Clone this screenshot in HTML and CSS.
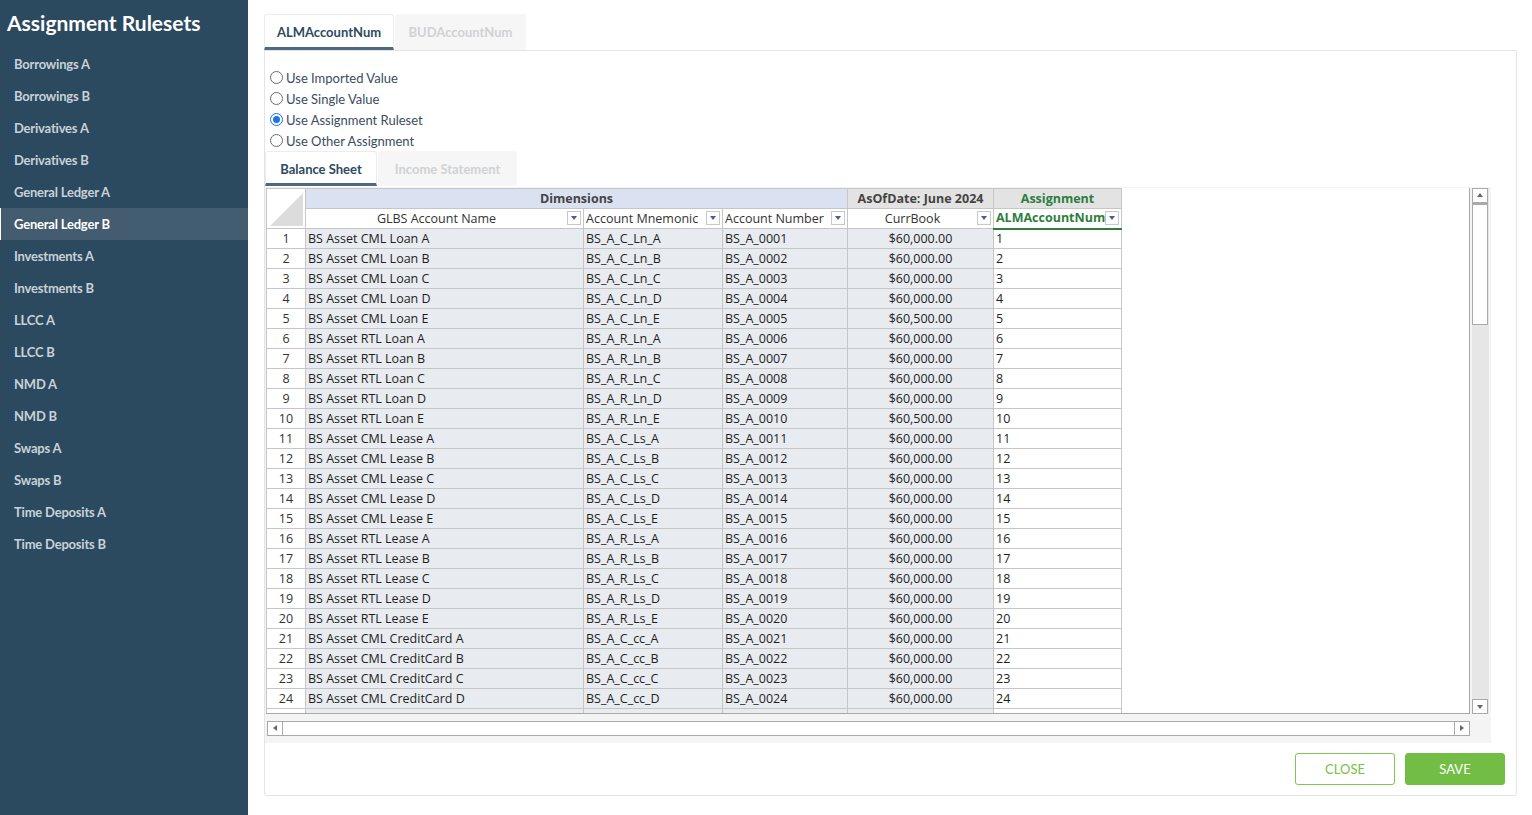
FILE: index.html
```html
<!DOCTYPE html>
<html>
<head>
<meta charset="utf-8">
<title>Assignment Rulesets</title>
<link rel="stylesheet" href="styles.css">
</head>
<body>
<aside class="sidebar">
  <h1 class="side-title">Assignment Rulesets</h1>
  <ul class="side-list">
    <li class="side-item">Borrowings A</li>
    <li class="side-item">Borrowings B</li>
    <li class="side-item">Derivatives A</li>
    <li class="side-item">Derivatives B</li>
    <li class="side-item">General Ledger A</li>
    <li class="side-item active">General Ledger B</li>
    <li class="side-item">Investments A</li>
    <li class="side-item">Investments B</li>
    <li class="side-item">LLCC A</li>
    <li class="side-item">LLCC B</li>
    <li class="side-item">NMD A</li>
    <li class="side-item">NMD B</li>
    <li class="side-item">Swaps A</li>
    <li class="side-item">Swaps B</li>
    <li class="side-item">Time Deposits A</li>
    <li class="side-item">Time Deposits B</li>
  </ul>
</aside>
<main class="main">
  <div class="tabs">
    <div class="tab active">ALMAccountNum</div>
    <div class="tab">BUDAccountNum</div>
  </div>
  <section class="panel">
    <div class="radios">
      <label class="radio"><span class="dot"></span>Use Imported Value</label>
      <label class="radio"><span class="dot"></span>Use Single Value</label>
      <label class="radio"><span class="dot checked"></span>Use Assignment Ruleset</label>
      <label class="radio"><span class="dot"></span>Use Other Assignment</label>
    </div>
    <div class="subtabs">
      <div class="subtab active">Balance Sheet</div>
      <div class="subtab">Income Statement</div>
    </div>
    <div class="gridwrap">
      <div class="gridrow">
        <div class="viewport">
          <table class="grid">
            <colgroup>
              <col class="c-num"><col class="c-name"><col class="c-mn"><col class="c-acc"><col class="c-cur"><col class="c-asg">
            </colgroup>
            <thead>
              <tr class="h1">
                <th class="corner" rowspan="2"><span class="tri"></span></th>
                <th class="dim" colspan="3">Dimensions</th>
                <th class="grp">AsOfDate: June 2024</th>
                <th class="grp green">Assignment</th>
              </tr>
              <tr class="h2">
                <th class="hc center"><span class="hlabel">GLBS Account Name</span><span class="flt"></span></th>
                <th class="hc"><span class="hlabel">Account Mnemonic</span><span class="flt"></span></th>
                <th class="hc"><span class="hlabel">Account Number</span><span class="flt"></span></th>
                <th class="hc center"><span class="hlabel">CurrBook</span><span class="flt"></span></th>
                <th class="hc asg"><span class="hlabel">ALMAccountNum</span><span class="flt"></span></th>
              </tr>
            </thead>
            <tbody>
              <tr><td class="n">1</td><td>BS Asset CML Loan A</td><td>BS_A_C_Ln_A</td><td>BS_A_0001</td><td class="v">$60,000.00</td><td class="a">1</td></tr>
              <tr><td class="n">2</td><td>BS Asset CML Loan B</td><td>BS_A_C_Ln_B</td><td>BS_A_0002</td><td class="v">$60,000.00</td><td class="a">2</td></tr>
              <tr><td class="n">3</td><td>BS Asset CML Loan C</td><td>BS_A_C_Ln_C</td><td>BS_A_0003</td><td class="v">$60,000.00</td><td class="a">3</td></tr>
              <tr><td class="n">4</td><td>BS Asset CML Loan D</td><td>BS_A_C_Ln_D</td><td>BS_A_0004</td><td class="v">$60,000.00</td><td class="a">4</td></tr>
              <tr><td class="n">5</td><td>BS Asset CML Loan E</td><td>BS_A_C_Ln_E</td><td>BS_A_0005</td><td class="v">$60,500.00</td><td class="a">5</td></tr>
              <tr><td class="n">6</td><td>BS Asset RTL Loan A</td><td>BS_A_R_Ln_A</td><td>BS_A_0006</td><td class="v">$60,000.00</td><td class="a">6</td></tr>
              <tr><td class="n">7</td><td>BS Asset RTL Loan B</td><td>BS_A_R_Ln_B</td><td>BS_A_0007</td><td class="v">$60,000.00</td><td class="a">7</td></tr>
              <tr><td class="n">8</td><td>BS Asset RTL Loan C</td><td>BS_A_R_Ln_C</td><td>BS_A_0008</td><td class="v">$60,000.00</td><td class="a">8</td></tr>
              <tr><td class="n">9</td><td>BS Asset RTL Loan D</td><td>BS_A_R_Ln_D</td><td>BS_A_0009</td><td class="v">$60,000.00</td><td class="a">9</td></tr>
              <tr><td class="n">10</td><td>BS Asset RTL Loan E</td><td>BS_A_R_Ln_E</td><td>BS_A_0010</td><td class="v">$60,500.00</td><td class="a">10</td></tr>
              <tr><td class="n">11</td><td>BS Asset CML Lease A</td><td>BS_A_C_Ls_A</td><td>BS_A_0011</td><td class="v">$60,000.00</td><td class="a">11</td></tr>
              <tr><td class="n">12</td><td>BS Asset CML Lease B</td><td>BS_A_C_Ls_B</td><td>BS_A_0012</td><td class="v">$60,000.00</td><td class="a">12</td></tr>
              <tr><td class="n">13</td><td>BS Asset CML Lease C</td><td>BS_A_C_Ls_C</td><td>BS_A_0013</td><td class="v">$60,000.00</td><td class="a">13</td></tr>
              <tr><td class="n">14</td><td>BS Asset CML Lease D</td><td>BS_A_C_Ls_D</td><td>BS_A_0014</td><td class="v">$60,000.00</td><td class="a">14</td></tr>
              <tr><td class="n">15</td><td>BS Asset CML Lease E</td><td>BS_A_C_Ls_E</td><td>BS_A_0015</td><td class="v">$60,000.00</td><td class="a">15</td></tr>
              <tr><td class="n">16</td><td>BS Asset RTL Lease A</td><td>BS_A_R_Ls_A</td><td>BS_A_0016</td><td class="v">$60,000.00</td><td class="a">16</td></tr>
              <tr><td class="n">17</td><td>BS Asset RTL Lease B</td><td>BS_A_R_Ls_B</td><td>BS_A_0017</td><td class="v">$60,000.00</td><td class="a">17</td></tr>
              <tr><td class="n">18</td><td>BS Asset RTL Lease C</td><td>BS_A_R_Ls_C</td><td>BS_A_0018</td><td class="v">$60,000.00</td><td class="a">18</td></tr>
              <tr><td class="n">19</td><td>BS Asset RTL Lease D</td><td>BS_A_R_Ls_D</td><td>BS_A_0019</td><td class="v">$60,000.00</td><td class="a">19</td></tr>
              <tr><td class="n">20</td><td>BS Asset RTL Lease E</td><td>BS_A_R_Ls_E</td><td>BS_A_0020</td><td class="v">$60,000.00</td><td class="a">20</td></tr>
              <tr><td class="n">21</td><td>BS Asset CML CreditCard A</td><td>BS_A_C_cc_A</td><td>BS_A_0021</td><td class="v">$60,000.00</td><td class="a">21</td></tr>
              <tr><td class="n">22</td><td>BS Asset CML CreditCard B</td><td>BS_A_C_cc_B</td><td>BS_A_0022</td><td class="v">$60,000.00</td><td class="a">22</td></tr>
              <tr><td class="n">23</td><td>BS Asset CML CreditCard C</td><td>BS_A_C_cc_C</td><td>BS_A_0023</td><td class="v">$60,000.00</td><td class="a">23</td></tr>
              <tr><td class="n">24</td><td>BS Asset CML CreditCard D</td><td>BS_A_C_cc_D</td><td>BS_A_0024</td><td class="v">$60,000.00</td><td class="a">24</td></tr>
              <tr><td class="n">25</td><td>BS Asset CML CreditCard E</td><td>BS_A_C_cc_E</td><td>BS_A_0025</td><td class="v">$60,000.00</td><td class="a">25</td></tr>
            </tbody>
          </table>
        </div>
        <div class="vscroll">
          <div class="sbtn"><span class="arr up"></span></div>
          <div class="vthumb"></div>
          <div class="vtrack"></div>
          <div class="sbtn"><span class="arr down"></span></div>
        </div>
      </div>
      <div class="hscroll">
        <div class="sbtn h"><span class="arr left"></span></div>
        <div class="htrack"></div>
        <div class="sbtn h"><span class="arr right"></span></div>
      </div>
    </div>
    <div class="footer">
      <button class="btn outline">CLOSE</button>
      <button class="btn solid">SAVE</button>
    </div>
  </section>
</main>
</body>
</html>
```
FILE: styles.css
```css
* { box-sizing: border-box; }
html, body { margin: 0; padding: 0; }
body {
  display: flex;
  width: 1532px;
  height: 815px;
  overflow: hidden;
  background: #ffffff;
  font-family: "Lato", "Open Sans", sans-serif;
}
.sidebar {
  width: 248px;
  flex: none;
  background: #2c4a5f;
  height: 815px;
}
.side-title {
  margin: 0;
  padding: 10px 0 0 7px;
  height: 48px;
  font-size: 21px;
  font-weight: 700;
  color: #ffffff;
  letter-spacing: 0;
}
.side-list { list-style: none; margin: 0; padding: 0; }
.side-item {
  height: 32px;
  line-height: 32px;
  padding-left: 14px;
  font-size: 13px;
  font-weight: 700;
  color: #c9d1d8;
  letter-spacing: -0.2px;
}
.side-item.active {
  background: #435c70;
  color: #ffffff;
  border-left: 1px solid #ffffff;
  padding-left: 13px;
}
.main {
  flex: 1;
  padding: 14px 15px 0 16px;
  display: flex;
  flex-direction: column;
}
.tabs { display: flex; height: 36px; }
.tab {
  width: 131px;
  height: 36px;
  display: flex;
  align-items: center;
  justify-content: center;
  font-size: 13px;
  font-weight: 700;
  color: #cfd2d4;
  background: #f6f6f6;
  border-radius: 3px 3px 0 0;
}
.tab.active {
  width: 130px;
  color: #2c4a5f;
  background: #ffffff;
  border: 1px solid #ececec;
  border-bottom: 3px solid #4d6a82;
  padding-top: 2px;
  margin-right: 1px;
}
.panel {
  border: 1px solid #e4e4e4;
  height: 746px;
  display: flex;
  flex-direction: column;
  border-radius: 0 0 3px 3px;
}
.radios { padding: 16px 0 0 5px; display: flex; flex-direction: column; }
.radio {
  display: flex;
  align-items: center;
  height: 21px;
  font-size: 13px;
  color: #3a4d5e;
}
.dot {
  width: 13px;
  height: 13px;
  border: 1px solid #6b6b6b;
  border-radius: 50%;
  margin-right: 3px;
  position: relative;
  background: #fff;
}
.dot.checked { border-color: #1a73e8; }
.dot.checked::after {
  content: "";
  position: absolute;
  left: 2px; top: 2px;
  width: 7px; height: 7px;
  border-radius: 50%;
  background: #1a73e8;
}
.subtabs { display: flex; height: 35px; }
.subtab {
  width: 139px;
  height: 35px;
  display: flex;
  align-items: center;
  justify-content: center;
  font-size: 13px;
  font-weight: 700;
  color: #cfd2d4;
  background: #f6f6f6;
  border-radius: 3px 3px 0 0;
}
.subtab.active {
  width: 112px;
  color: #2c4a5f;
  background: #fff;
  border: 1px solid #ececec;
  border-bottom: 3px solid #4d6a82;
  margin-right: 1px;
  padding-top: 2px;
}
.gridwrap {
  width: 1226px;
  background: #f4f4f4;
  padding: 1px 0 7px 1px;
  margin-top: 1px;
}
.gridrow { display: flex; }
.viewport {
  width: 1204px;
  height: 526px;
  overflow: hidden;
  background: #ffffff;
  border-right: 1px solid #a9a9a9;
  border-bottom: 1px solid #a9a9a9;
}
.grid {
  border-collapse: collapse;
  table-layout: fixed;
  width: 855px;
  font-family: "Open Sans", "Noto Sans", sans-serif;
  font-size: 12.5px;
  color: #1e1e1e;
}
.c-num { width: 39px; }
.c-name { width: 278px; }
.c-mn { width: 139px; }
.c-acc { width: 125px; }
.c-cur { width: 146px; }
.c-asg { width: 128px; }
.grid th, .grid td {
  border: 1px solid #c6c6c6;
  height: 20px;
  padding: 0 2px;
  white-space: nowrap;
  overflow: hidden;
  line-height: 18px;
}
.corner { background: #ffffff; position: relative; padding: 0; }
.tri {
  position: absolute;
  right: 2px; bottom: 2px;
  width: 0; height: 0;
  border-left: 33px solid transparent;
  border-bottom: 33px solid #dcdcdc;
}
.h1 th {
  font-weight: 700;
  color: #444;
  text-align: center;
}
.dim { background: #dae1f0; }
.grp { background: #e3e3e3; }
.green { color: #2e7d3e !important; }
.hc {
  background: #fff;
  font-weight: 400;
  color: #333;
  text-align: left;
  position: relative;
  padding-right: 18px !important;
}
.hc.center { text-align: center; }
.hc.asg {
  color: #2e7d3e;
  font-weight: 700;
  border-bottom: 2px solid #2e7d3e;
}
.flt {
  position: absolute;
  right: 2px; top: 2px;
  width: 14px; height: 14px;
  border: 1px solid #c8c8c8;
  background: #fff;
}
.flt::after {
  content: "";
  position: absolute;
  left: 3px; top: 4px;
  border-left: 3.5px solid transparent;
  border-right: 3.5px solid transparent;
  border-top: 4px solid #4a5a9c;
}
.grid td { background: #e8ebef; }
.grid td.n { background: #fff; text-align: center; color: #333; }
.grid td.v { text-align: center; }
.grid td.a { background: #fff; }
.vscroll {
  width: 17px;
  margin-left: 2px;
  height: 526px;
  display: flex;
  flex-direction: column;
  background: #e6e6e6;
}
.sbtn {
  width: 16px;
  height: 15px;
  border: 1px solid #a9a9a9;
  background: #fff;
  position: relative;
  flex: none;
}
.vthumb {
  height: 122px;
  width: 16px;
  border: 1px solid #a9a9a9;
  border-top: 2px solid #a9a9a9;
  background: #fff;
  flex: none;
}
.vtrack { flex: 1; }
.arr { position: absolute; width: 0; height: 0; }
.arr.up { left: 4px; top: 4px; border-left: 3.5px solid transparent; border-right: 3.5px solid transparent; border-bottom: 4px solid #666; }
.arr.down { left: 4px; top: 5px; border-left: 3.5px solid transparent; border-right: 3.5px solid transparent; border-top: 4px solid #666; }
.arr.left { left: 5px; top: 3px; border-top: 3.5px solid transparent; border-bottom: 3.5px solid transparent; border-right: 4px solid #666; }
.arr.right { left: 5px; top: 3px; border-top: 3.5px solid transparent; border-bottom: 3.5px solid transparent; border-left: 4px solid #666; }
.hscroll {
  display: flex;
  width: 1203px;
  height: 15px;
  margin-top: 7px;
  margin-left: 1px;
  background: #fff;
  border: 1px solid #a9a9a9;
}
.sbtn.h { width: 15px; height: 13px; border: none; }
.sbtn.h:first-child { border-right: 1px solid #a9a9a9; }
.sbtn.h:last-child { border-left: 1px solid #a9a9a9; }
.htrack { flex: 1; }
.footer {
  display: flex;
  justify-content: flex-end;
  gap: 10px;
  padding: 10px 11px 0 0;
}
.btn {
  width: 100px;
  height: 32px;
  font-family: "Lato", "Open Sans", sans-serif;
  font-size: 13px;
  border-radius: 3px;
  cursor: pointer;
}
.btn.outline { background: #fff; border: 1px solid #80c653; color: #78c048; }
.btn.solid { background: #72bd44; border: 1px solid #72bd44; color: #fff; }
```
